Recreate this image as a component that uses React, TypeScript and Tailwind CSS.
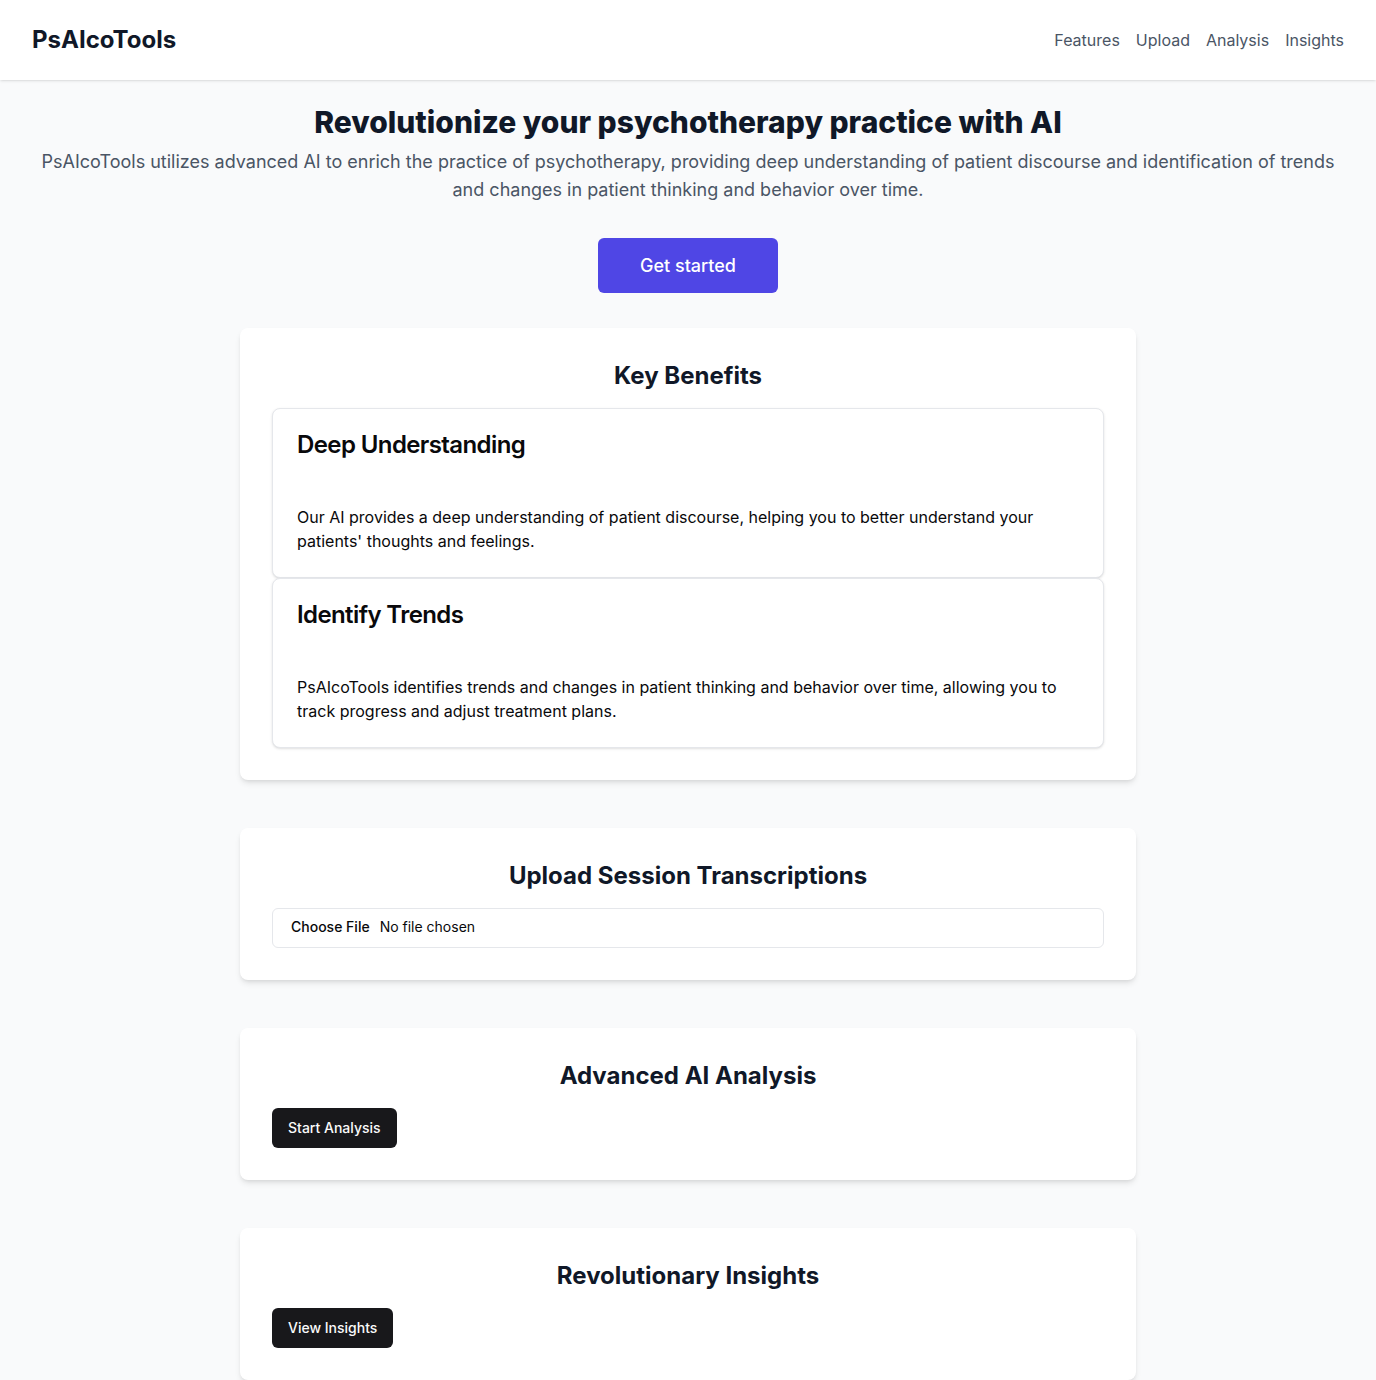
import React from "react";

function InnerCard({ title, text }: { title: string; text: string }) {
  return (
    <div className="rounded-lg border border-gray-200 bg-white text-[#09090b] shadow-sm">
      <div className="flex flex-col space-y-1.5 p-6">
        <h3 className="text-2xl font-semibold leading-none tracking-tight">{title}</h3>
      </div>
      <div className="p-6">
        <p className="text-base leading-6">{text}</p>
      </div>
    </div>
  );
}

export default function App() {
  return (
    <div className="min-h-screen bg-gray-50" style={{ fontFamily: "Inter, 'Noto Sans', sans-serif" }}>
      <header className="flex items-center justify-between bg-white px-8 py-6 shadow-sm">
        <h1 className="text-2xl font-bold leading-8 text-gray-900">PsAIcoTools</h1>
        <nav className="flex gap-4 text-base text-gray-600">
          <a href="#features">Features</a>
          <a href="#upload">Upload</a>
          <a href="#analysis">Analysis</a>
          <a href="#insights">Insights</a>
        </nav>
      </header>
      <main className="px-8 pt-6 text-center">
        <h2 className="text-3xl font-extrabold leading-9 text-gray-900">
          Revolutionize your psychotherapy practice with AI
        </h2>
        <p className="mt-2 text-lg leading-7 text-gray-600">
          PsAIcoTools utilizes advanced AI to enrich the practice of psychotherapy, providing deep understanding of patient discourse and identification of trends and changes in patient thinking and behavior over time.
        </p>
        <div className="mt-[34px] flex justify-center">
          <button className="h-[55px] w-[180px] rounded-md bg-[#4f46e5] text-lg font-medium text-white">
            Get started
          </button>
        </div>
      </main>
      <div className="mx-auto mt-[35px] flex max-w-4xl flex-col gap-12 pb-8">
        <section className="rounded-lg bg-white p-8 text-left shadow-md">
          <h2 className="mb-4 text-center text-2xl font-bold leading-8 text-gray-900">Key Benefits</h2>
          <InnerCard
            title="Deep Understanding"
            text="Our AI provides a deep understanding of patient discourse, helping you to better understand your patients' thoughts and feelings."
          />
          <InnerCard
            title="Identify Trends"
            text="PsAIcoTools identifies trends and changes in patient thinking and behavior over time, allowing you to track progress and adjust treatment plans."
          />
        </section>
        <section className="rounded-lg bg-white p-8 shadow-md">
          <h2 className="mb-4 text-center text-2xl font-bold leading-8 text-gray-900">Upload Session Transcriptions</h2>
          <input
            type="file"
            className="flex h-10 w-full rounded-md border border-gray-200 bg-white px-3 py-2 text-sm text-[#09090b] file:mr-1 file:border-0 file:bg-transparent file:px-1.5 file:text-sm file:font-medium"
          />
        </section>
        <section className="rounded-lg bg-white p-8 shadow-md">
          <h2 className="mb-4 text-center text-2xl font-bold leading-8 text-gray-900">Advanced AI Analysis</h2>
          <button className="h-10 rounded-md bg-[#18181b] px-4 text-sm font-medium text-[#fafafa]">Start Analysis</button>
        </section>
        <section className="rounded-lg bg-white p-8 shadow-md">
          <h2 className="mb-4 text-center text-2xl font-bold leading-8 text-gray-900">Revolutionary Insights</h2>
          <button className="h-10 rounded-md bg-[#18181b] px-4 text-sm font-medium text-[#fafafa]">View Insights</button>
        </section>
      </div>
    </div>
  );
}
